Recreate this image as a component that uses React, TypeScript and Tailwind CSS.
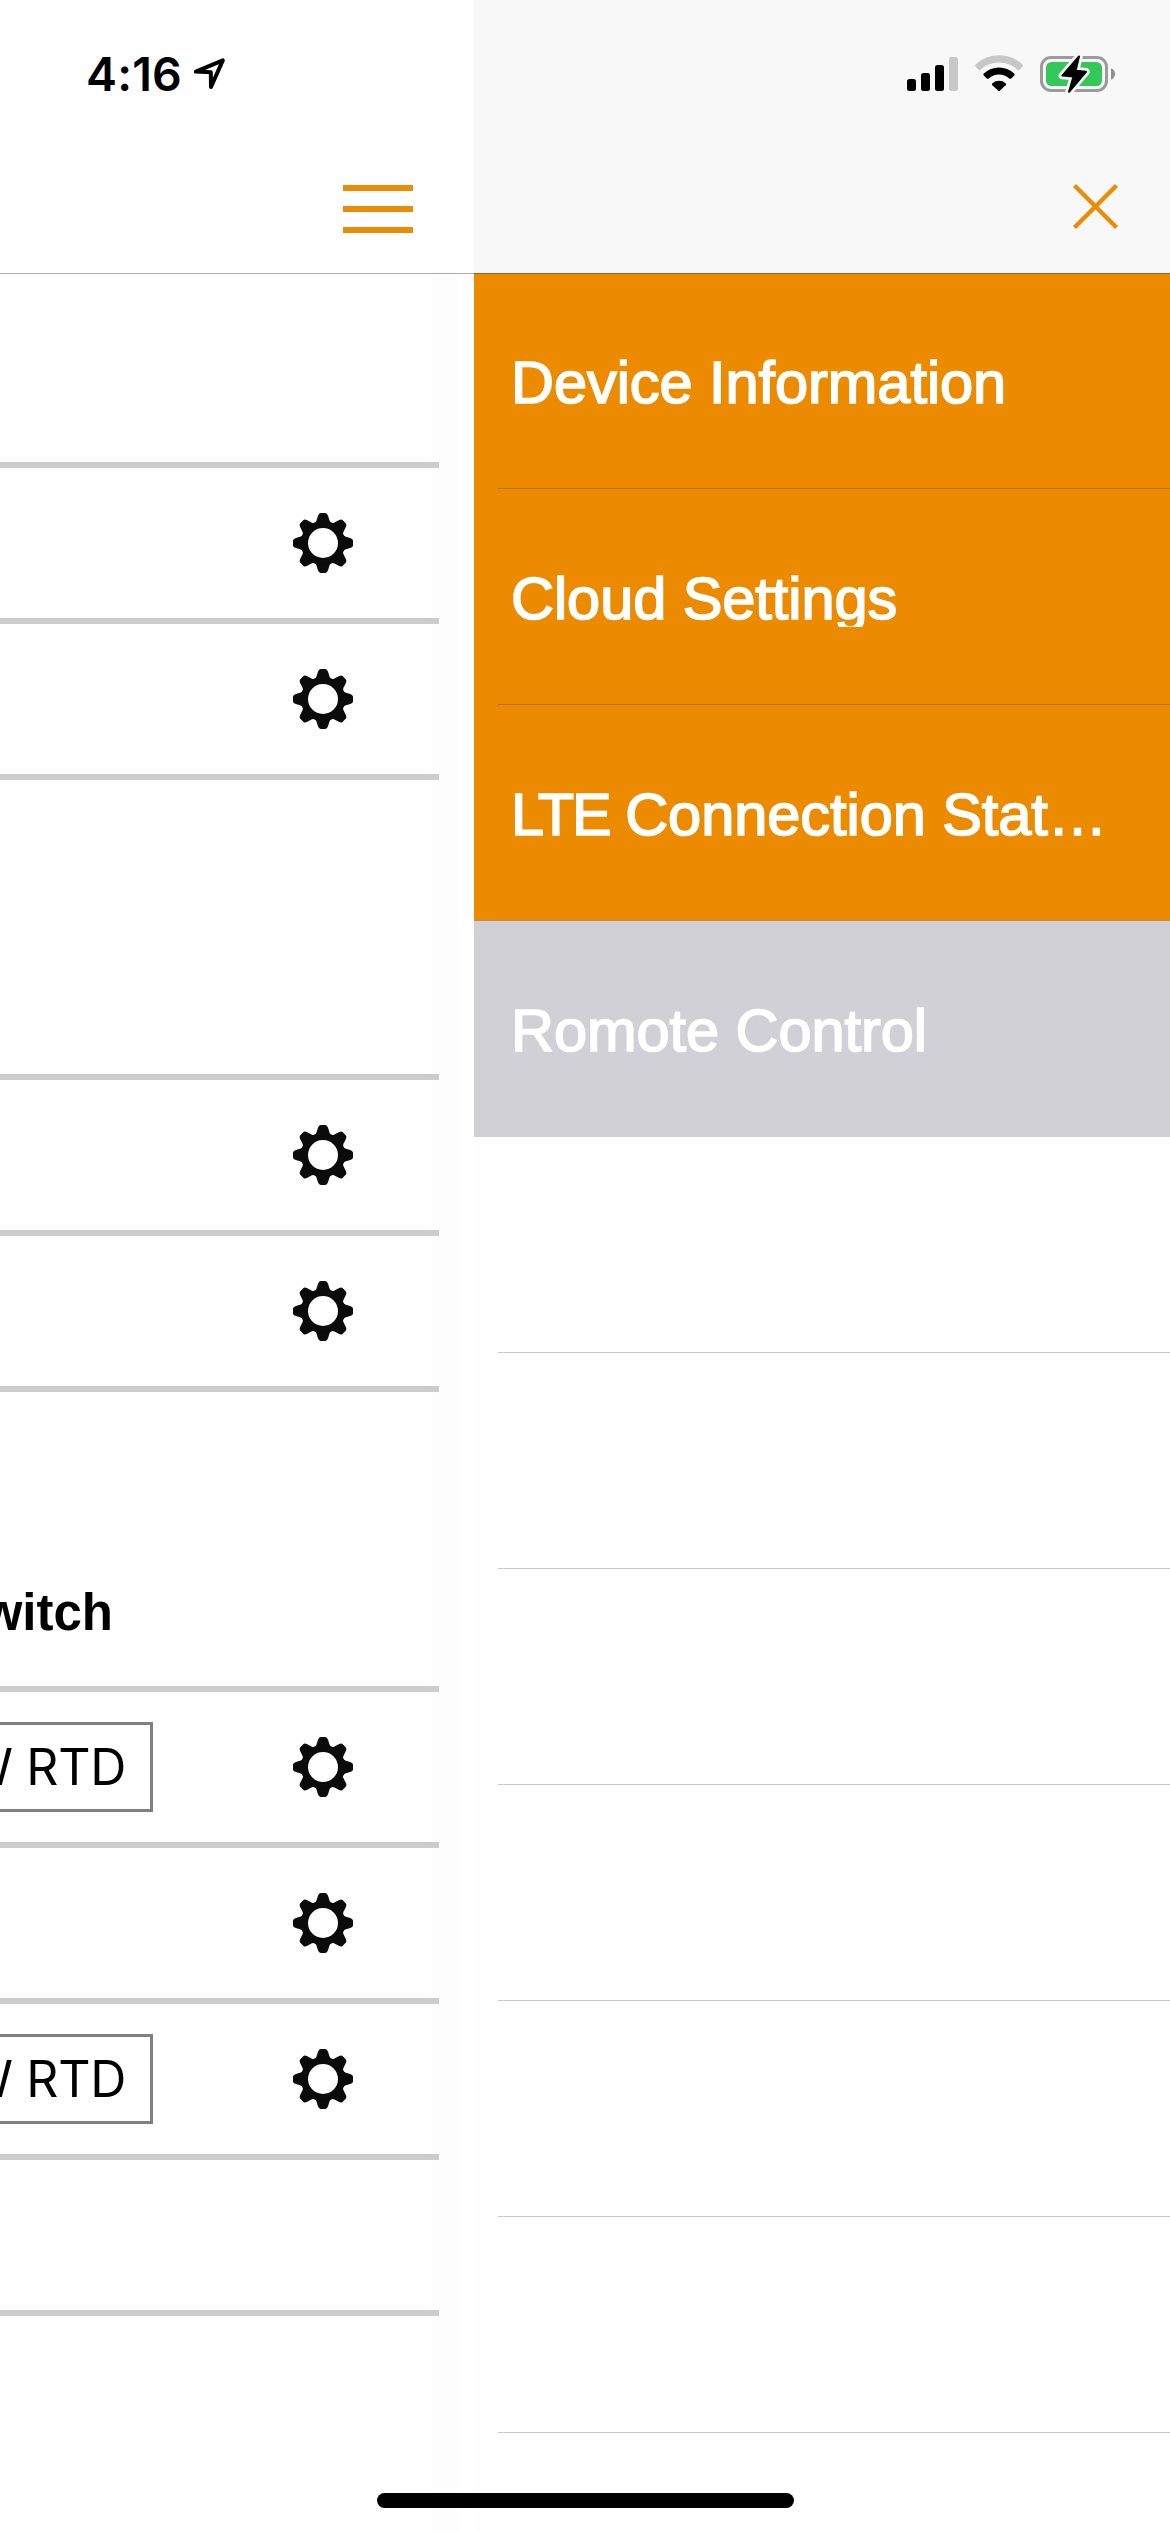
import type { ReactNode } from "react";

const TOOTH = "M0 0 L-9.6 -20 Q-7.4 -20 -6.6 -22.2 L-5 -27.2 Q-4 -30 -2.4 -30 L2.4 -30 Q4 -30 5 -27.2 L6.6 -22.2 Q7.4 -20 9.6 -20 Z";

function Gear() {
  return (
    <svg className="h-[60px] w-[60px]" viewBox="-30 -30 60 60" fill="#0b0b0b">
      {[0, 45, 90, 135, 180, 225, 270, 315].map((a) => (
        <path key={a} d={TOOTH} transform={`rotate(${a})`} />
      ))}
      <circle r="21.4" />
      <circle r="15" fill="#fefefe" />
    </svg>
  );
}

function Row({ gear = true, chip, last }: { gear?: boolean; chip?: string; last?: boolean }) {
  return (
    <div className={last ? "flex h-[162px] w-[439px] items-center border-y-6 border-[#cccccc]" : "flex h-[156px] w-[439px] items-center border-t-6 border-[#cccccc]"}>
      <div className="flex w-[293px]">
        {chip && (
          <div className="flex h-[90px] w-[153px] items-center justify-end overflow-hidden border-y-3 border-r-3 border-[#808080] pr-[24px] text-[50px] leading-none tracking-[-0.3px] whitespace-nowrap">
            <span>{chip}</span>
          </div>
        )}
      </div>
      {gear && <Gear />}
    </div>
  );
}

function Group({ children }: { children: ReactNode }) {
  return <div className="flex flex-col">{children}</div>;
}

function StatusIcons() {
  return (
    <svg className="h-[46px] w-[220px]" viewBox="900 50 220 46">
      <rect x="907" y="79" width="9" height="12" rx="2.5" />
      <rect x="921" y="73" width="9" height="18" rx="2.5" />
      <rect x="935" y="65" width="9" height="26" rx="2.5" />
      <rect x="949" y="57" width="9" height="34" rx="2.5" fill="#c7c7c7" />
      <path d="M975.6 64.4 A34.5 34.5 0 0 1 1022.4 64.4 Q1023.6 65.6 1022.4 66.7 L1019.4 69.8 Q1018.4 70.8 1017.3 69.8 A26.5 26.5 0 0 0 980.7 69.8 Q979.6 70.8 978.6 69.8 L975.6 66.7 Q974.4 65.6 975.6 64.4Z" fill="#c7c7c7" />
      <path d="M983.8 73.5 A22 22 0 0 1 1014.2 73.5 Q1015.2 74.6 1014.2 75.6 L1011.3 78.4 Q1010.3 79.3 1009.2 78.4 A15 15 0 0 0 988.8 78.4 Q987.7 79.3 986.7 78.4 L983.8 75.6 Q982.8 74.6 983.8 73.5Z" />
      <path d="M992.4 83.2 A10 10 0 0 1 1005.6 83.2 Q1006.6 84.2 1005.6 85.2 L999.8 90.8 Q999 91.5 998.2 90.8 L992.4 85.2 Q991.4 84.2 992.4 83.2Z" />
      <rect x="1041.5" y="57.5" width="65" height="33" rx="9.5" fill="none" stroke="#9b9b9b" strokeWidth="3" />
      <rect x="1046" y="62" width="56" height="24" rx="5.5" fill="#34c759" />
      <path d="M1111 68.3 Q1115 70 1115 74 Q1115 78 1111 79.7Z" fill="#8f8f8f" />
      <path
        d="M1079 56.4 L1062.4 75.6 L1073.6 76.4 L1069 91.8 L1086 71.8 L1075.6 70.8 Z"
        stroke="#f8f8f8" strokeWidth="7.5" strokeLinejoin="round" fill="#f8f8f8"
      />
      <path
        d="M1079 56.4 L1062.4 75.6 L1073.6 76.4 L1069 91.8 L1086 71.8 L1075.6 70.8 Z"
        stroke="#000" strokeWidth="2" strokeLinejoin="round"
      />
    </svg>
  );
}

function MenuItem({ children, tone }: { children: ReactNode; tone: string }) {
  return (
    <div className={`flex flex-col pl-[37px] ${tone}`}>
      <div className="h-[62px] overflow-hidden text-[59.5px] leading-[68px] tracking-[-0.05px] whitespace-nowrap text-white [-webkit-text-stroke:1.7px_white]">
        {children}
      </div>
    </div>
  );
}

function Divider() {
  return (
    <div className="flex h-px bg-[#ec8b00] pl-6">
      <div className="h-px flex-1 bg-[#b17317]" />
    </div>
  );
}

export default function App() {
  return (
    <div className="relative flex h-[2532px] w-[1170px] overflow-hidden bg-[#fefefe] text-black">
      <main className="flex w-[474px] flex-col font-['Inter',sans-serif]">
        <header className="flex h-[274px] flex-col border-b border-[#acacac]">
          <div className="flex h-[148px] items-start pt-[50px] pl-[86px]">
            <span className="w-[108px] text-[46.5px] leading-[48px] font-semibold tracking-[0.2px]">4:16</span>
            <svg className="mt-[6px] h-[36px] w-[34px]" viewBox="194 56 34 36" fill="none" stroke="#000" strokeWidth="4" strokeLinejoin="round">
              <path d="M195.8 71.6 L222.8 60.4 L211 87 L210.8 72.3Z" />
            </svg>
          </div>
          <div className="flex flex-col gap-[15px] pt-[37px] pl-[343px]">
            <div className="h-1.5 w-[70px] bg-[#ea8c06]" />
            <div className="h-1.5 w-[70px] bg-[#ea8c06]" />
            <div className="h-1.5 w-[70px] bg-[#ea8c06]" />
          </div>
        </header>
        <div className="flex flex-1 flex-col bg-[linear-gradient(to_right,#fefefe_431px,#fdfdfd_431px,#fdfdfd_457px,#ffffff_457px)] pt-[188px]">
          <Group>
            <Row />
            <Row last />
          </Group>
          <div className="h-[294px]" />
          <Group>
            <Row />
            <Row last />
          </Group>
          <div className="flex h-[294px] items-start pt-[191px]">
            <div className="flex w-[113px] justify-end overflow-hidden font-['Liberation_Sans',Arial,sans-serif] text-[51px] leading-[60px] font-bold">
              <span>witch</span>
            </div>
          </div>
          <Group>
            <Row chip="W RTD" />
            <Row />
            <Row chip="W RTD" />
            <Row gear={false} last />
          </Group>
        </div>
      </main>

      <aside className="flex w-[696px] flex-col font-['Liberation_Sans',Arial,sans-serif]">
        <header className="flex h-[274px] flex-col border-b border-[#8a6a2c] bg-[#f8f8f8]">
          <div className="flex h-[148px] items-start pt-[50px] pl-[426px]">
            <StatusIcons />
          </div>
          <div className="flex justify-end pt-[34px] pr-[50px]">
            <svg className="h-[49px] w-[49px]" viewBox="-24.5 -24.5 49 49" stroke="#ea8c06" strokeWidth="4.4">
              <path d="M-21 -21 L21 21 M21 -21 L-21 21" />
            </svg>
          </div>
        </header>
        <nav className="flex flex-col">
          <MenuItem tone="h-[214px] bg-[#ec8b00] pt-[75px]">Device Information</MenuItem>
          <Divider />
          <MenuItem tone="h-[215px] bg-[#ec8b00] pt-[76px]">Cloud Settings</MenuItem>
          <Divider />
          <MenuItem tone="h-[216px] border-b border-[#c28a42] bg-[#ec8b00] pt-[76px]">
            <span className="tracking-[-2px]">LTE</span> <span className="-ml-[1px]">Connection</span>{" "}
            <span>Stat…</span>
          </MenuItem>
          <MenuItem tone="h-[216px] bg-[#d1d0d6] pt-[76px]">Romote Control</MenuItem>
          {[0, 1, 2, 3, 4, 5].map((i) => (
            <div key={i} className="ml-6 h-[216px] border-b border-[#c8c8c8]" />
          ))}
        </nav>
      </aside>

      <div className="absolute top-[2493px] left-[377px] h-[15px] w-[417px] rounded-full bg-black" />
    </div>
  );
}
